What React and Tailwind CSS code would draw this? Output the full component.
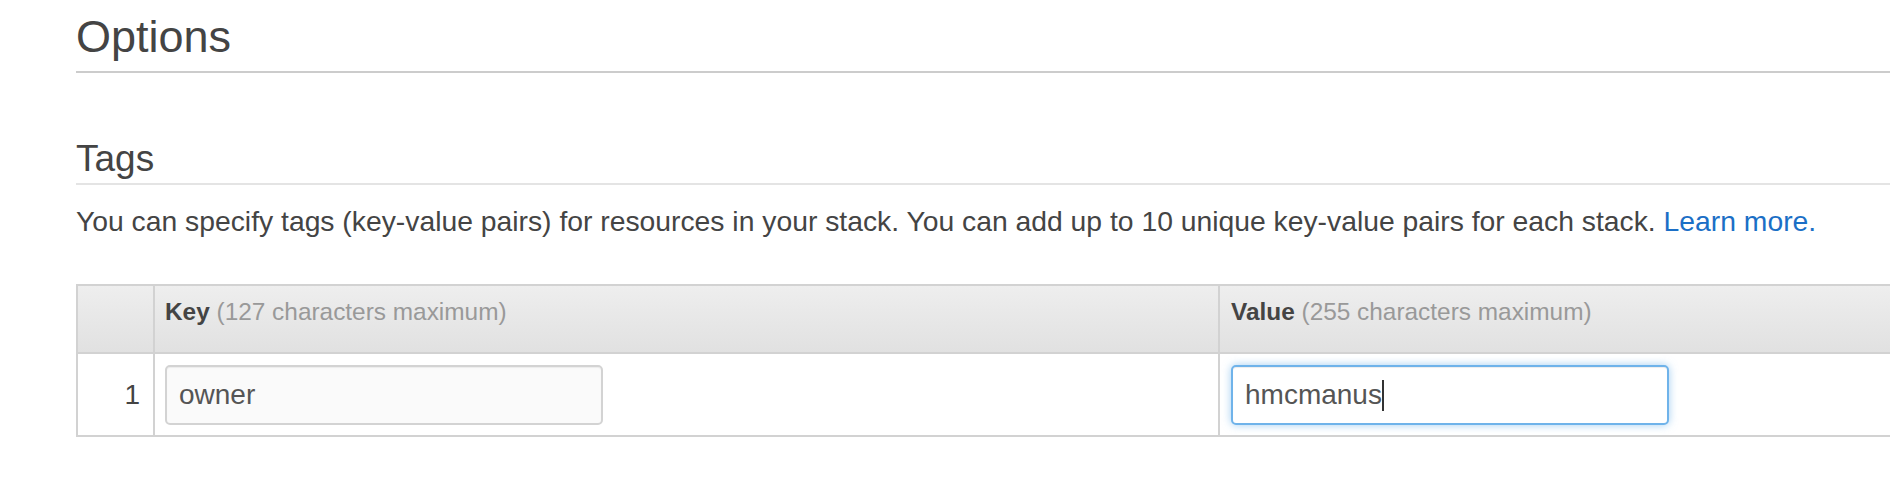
import React from 'react';

const HeaderCell = ({ label, note, className }) => (
  <div className={className}>
    <span className="font-bold text-[#444]">{label}</span>{' '}
    <span className="text-[#999]">{note}</span>
  </div>
);

const App = () => {
  return (
    <div className="w-[1890px] h-[504px] overflow-hidden bg-white font-['Liberation_Sans',Arial,sans-serif]">
      <div className="ml-[76px] w-[1900px]">
        <h1 className="pt-[14px] pb-3 text-[45px] leading-[45px] text-[#444] border-b-2 border-[#cccccc]">
          Options
        </h1>

        <h2 className="mt-[67px] pb-[6px] text-[37px] leading-[37px] text-[#444] border-b-2 border-[#e4e4e4]">
          Tags
        </h2>

        <p className="mt-[22px] text-[28.3px] leading-[28px] text-[#444]">
          You can specify tags (key-value pairs) for resources in your stack. You can add up to 10 unique key-value pairs for each stack.{' '}
          <a href="#" className="text-[#1b6fc6]">Learn more.</a>
        </p>

        <div className="mt-[49px] border-2 border-[#d2d2d2]">
          {/* header */}
          <div className="flex h-[68px] border-b-2 border-[#d2d2d2] bg-linear-to-b from-[#eeeeee] to-[#e1e1e1] text-[24.4px] leading-[24px]">
            <div className="w-[77px] border-r-2 border-[#d2d2d2]" />
            <HeaderCell
              label="Key"
              note="(127 characters maximum)"
              className="w-[1065px] border-r-2 border-[#d2d2d2] pl-[10px] pt-[14px]"
            />
            <HeaderCell
              label="Value"
              note="(255 characters maximum)"
              className="flex-1 pl-[11px] pt-[14px]"
            />
          </div>

          {/* row 1 */}
          <div className="flex h-[81px]">
            <div className="w-[77px] border-r-2 border-[#d2d2d2] flex items-center justify-end pr-[13px] text-[28px] leading-[28px] text-[#444]">
              1
            </div>
            <div className="w-[1065px] border-r-2 border-[#d2d2d2] pl-[10px] pt-[11px]">
              <div className="w-[438px] h-[60px] flex items-center pl-[12px] rounded-[5px] border-2 border-[#d3d3d3] bg-[#fafafa] shadow-[inset_0_1px_1px_rgba(0,0,0,0.06)] text-[28px] leading-[28px] text-[#555]">
                owner
              </div>
            </div>
            <div className="flex-1 pl-[11px] pt-[11px]">
              <div className="w-[438px] h-[60px] flex items-center pl-[12px] rounded-[5px] border-2 border-[#6fb3ea] bg-white shadow-[inset_0_1px_1px_rgba(0,0,0,0.075),0_0_8px_rgba(102,175,233,0.6)] text-[28px] leading-[28px] text-[#555]">
                <span>hmcmanus</span>
                <span className="w-[2px] h-[31px] bg-[#333]" />
              </div>
            </div>
          </div>
        </div>
      </div>
    </div>
  );
};

export default App;
